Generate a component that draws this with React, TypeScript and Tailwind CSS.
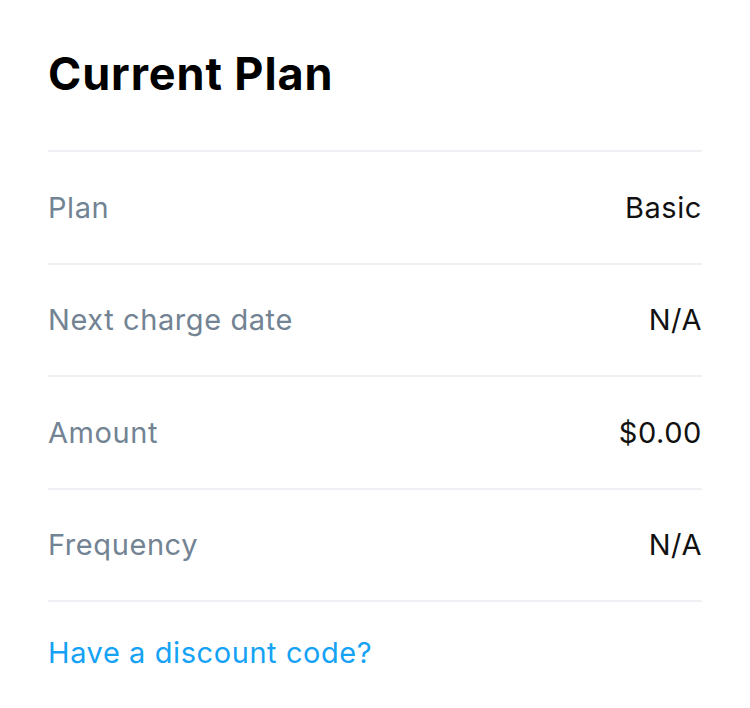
export default function App() {
  const rows = [
    { label: "Plan", value: "Basic" },
    { label: "Next charge date", value: "N/A" },
    { label: "Amount", value: "$0.00" },
    { label: "Frequency", value: "N/A" },
  ];
  return (
    <div
      className="min-h-[708px] w-[750px] bg-white px-12 pt-[48px]"
      style={{ fontFamily: "Inter, 'Liberation Sans', sans-serif" }}
    >
      <h1 className="h-[102px] text-[45px] font-bold leading-[52px] tracking-[0.02em] text-black">
        Current Plan
      </h1>
      <div className="border-t-2 border-[#eef0f3]">
        {rows.map((r) => (
          <div
            key={r.label}
            className="flex h-[112.5px] items-center justify-between border-b-2 border-[#eef0f3] text-[29px] tracking-[0.02em]"
          >
            <span className="text-[#728393]">{r.label}</span>
            <span className="text-[#111]">{r.value}</span>
          </div>
        ))}
      </div>
      <div className="pt-[32px] text-[29px] leading-[38px] tracking-[0.02em] text-[#15a2f5]">
        Have a discount code?
      </div>
    </div>
  );
}
